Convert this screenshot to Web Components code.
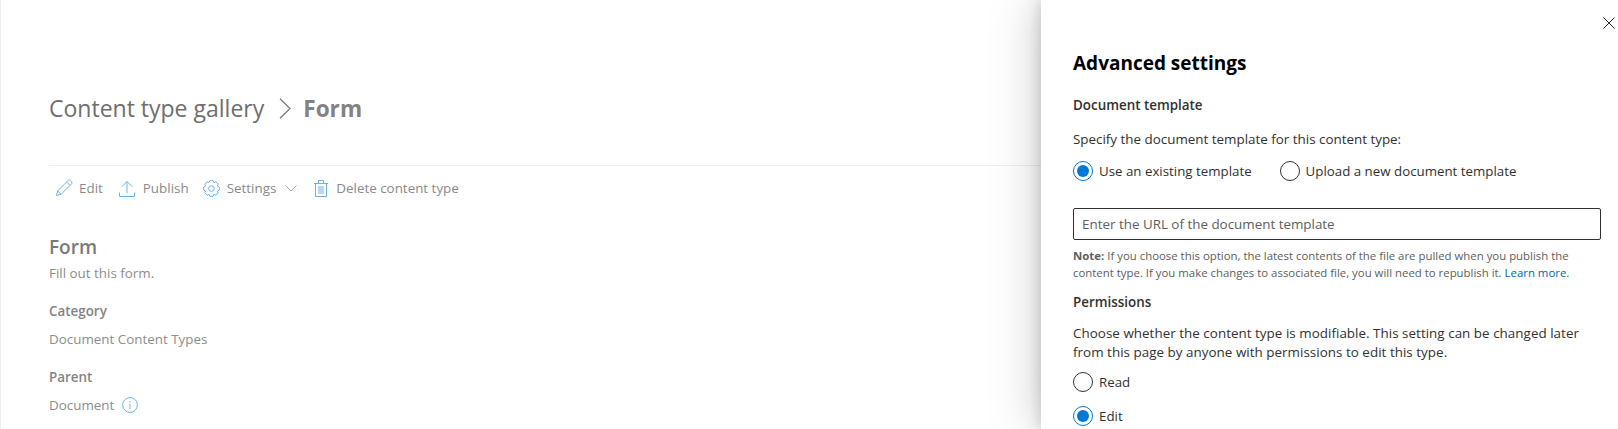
<!DOCTYPE html>
<html lang="en"><head><meta charset="utf-8"><title>Content type gallery</title>
<style>
html,body{margin:0;padding:0;background:#fff;height:429px;overflow:hidden}
body{font-family:"Open Sans","Liberation Sans",sans-serif;font-size:13.4px;color:#323130}
</style></head><body>
<ct-page>
  <ct-breadcrumb slot="head" parent="Content type gallery" current="Form"></ct-breadcrumb>
  <ct-toolbar slot="head">
    <ct-cmd icon="edit" gap="6" style="margin-left:6px">Edit</ct-cmd>
    <ct-cmd icon="publish" gap="8" style="margin-left:16px">Publish</ct-cmd>
    <ct-cmd icon="gear" gap="7" caret style="margin-left:14px">Settings</ct-cmd>
    <ct-cmd icon="trash" gap="8" style="margin-left:17px">Delete content type</ct-cmd>
  </ct-toolbar>
  <ct-details title-text="Form" desc="Fill out this form.">
    <ct-field label="Category">Document Content Types</ct-field>
    <ct-field label="Parent" info>Document</ct-field>
  </ct-details>
</ct-page>
<ct-panel heading="Advanced settings">
  <ct-section label="Document template" style="margin-top:19px">
    <p class="d">Specify the document template for this content type:</p>
  </ct-section>
  <ct-radio-row>
    <ct-radio checked>Use an existing template</ct-radio>
    <ct-radio style="margin-left:28px">Upload a new document template</ct-radio>
  </ct-radio-row>
  <ct-input placeholder="Enter the URL of the document template"></ct-input>
  <ct-note>If you choose this option, the latest contents of the file are pulled when you publish the<br>content type. If you make changes to associated file, you will need to republish it. </ct-note>
  <ct-section label="Permissions" style="margin-top:11px;--gap:12px">
    <p class="d" style="letter-spacing:.035px">Choose whether the content type is modifiable. This setting can be changed later<br>from this page by anyone with permissions to edit this type.</p>
  </ct-section>
  <ct-radio style="margin-top:9px">Read</ct-radio>
  <ct-radio checked style="margin-top:14px">Edit</ct-radio>
</ct-panel>
<script>
function gearPath(){
  const n=8,cx=8.5,cy=8.5,ro=8,ri=6.4;let d='';
  for(let i=0;i<n;i++){
    const a=i*2*Math.PI/n-Math.PI/2,w=.2,g=.19;
    const pts=[[ri,a-w-g],[ro,a-w],[ro,a+w],[ri,a+w+g]];
    for(const [r,t] of pts){d+=(d?'L':'M')+(cx+r*Math.cos(t)).toFixed(2)+' '+(cy+r*Math.sin(t)).toFixed(2);}
  }
  return d+'Z';
}
const ICONS={
edit:'<svg width="18" height="18" viewBox="0 0 18 18" fill="none" stroke="#6cb2ea" stroke-width="1"><path d="M1.5 16.5l1.2-4.6L12.9 1.7c.8-.8 2-.8 2.8 0l.6.6c.8.8.8 2 0 2.8L6.1 15.3z"/><path d="M2.7 11.9l3.4 3.4M11.6 3l3.4 3.4"/></svg>',
publish:'<svg width="16" height="17" viewBox="0 0 16 17" fill="none" stroke="#6cb2ea" stroke-width="1"><path d="M8 13V1.5M2.8 6.7L8 1.5l5.2 5.2M.5 12.5v4h15v-4"/></svg>',
gear:'<svg width="17" height="17" viewBox="0 0 17 17" fill="none" stroke="#6cb2ea" stroke-width="1" stroke-linejoin="round"><path d="'+gearPath()+'"/><circle cx="8.5" cy="8.5" r="2.8"/></svg>',
trash:'<svg width="14" height="17" viewBox="0 0 14 17" fill="none" stroke="#6cb2ea" stroke-width="1"><path d="M0 3.5h14M1.5 3.5v13h11v-13M4.5 3.5V.5h5v3M5 6v8M7 6v8M9 6v8"/></svg>'
};
function def(name,css,html){
  customElements.define(name,class extends HTMLElement{
    connectedCallback(){
      if(this.shadowRoot)return;
      const r=this.attachShadow({mode:'open'});
      r.innerHTML='<style>'+css+'</style>'+(typeof html==='function'?html(this):html);
    }
  });
}
const attr=(e,n)=>e.getAttribute(n)||'';
def('ct-page',`:host{display:block;height:429px;box-sizing:border-box;border-left:1px solid #eeeeee;padding:89px 0 0 48px;color:#7f7f7f;overflow:hidden}`,
 `<slot name="head"></slot><slot></slot>`);
def('ct-breadcrumb',`:host{display:flex;align-items:center;height:38px;color:#6f6e6d;font-size:23px}
 svg{margin:0 12px 0 15px;flex:none}b{font-weight:700;color:#838282;font-size:22.6px}`,
 e=>`<span>${attr(e,'parent')}</span><svg width="12" height="21" viewBox="0 0 12 21" fill="none" stroke="#7a7a7a" stroke-width="1.3"><path d="M1 .7l10 9.8L1 20.3"/></svg><b>${attr(e,'current')}</b>`);
def('ct-toolbar',`:host{display:flex;align-items:center;height:44px;margin-top:38px;border-top:1px solid #eeeeee;width:1100px}`,`<slot></slot>`);
def('ct-cmd',`:host{display:inline-flex;align-items:center;color:#8a8a8a}
 .c{margin-left:9px}`,
 e=>`${ICONS[attr(e,'icon')]}<span style="margin-left:${attr(e,'gap')}px"><slot></slot></span>${e.hasAttribute('caret')?'<svg class="c" width="12" height="7" viewBox="0 0 12 7" fill="none" stroke="#a8a8a8"><path d="M.5.5L6 6l5.5-5.5"/></svg>':''}`);
def('ct-details',`:host{display:block;margin-top:24px}
 h2{margin:0;font-size:19px;font-weight:600;line-height:26px;color:#7b7a79}
 p{margin:0;line-height:20px;margin-top:3px;color:#8d8d8d}`,
 e=>`<h2>${attr(e,'title-text')}</h2><p>${attr(e,'desc')}</p><slot></slot>`);
def('ct-field',`:host{display:block;margin-top:18px}
 b{display:block;font-weight:600;line-height:20px;color:#848484}
 div{display:flex;align-items:center;line-height:20px;margin-top:8px;color:#8d8d8d}
 svg{margin-left:8px}`,
 e=>`<b>${attr(e,'label')}</b><div><slot></slot>${e.hasAttribute('info')?'<svg width="16" height="16" viewBox="0 0 16 16" fill="none" stroke="#6cb2ea"><circle cx="8" cy="8" r="7.4"/><path d="M8 6.8V12M8 4v1.4"/></svg>':''}</div>`);
def('ct-panel',`:host{position:absolute;top:0;right:0;bottom:0;width:577px;box-sizing:border-box;background:#fff;padding:50px 17px 0 32px;box-shadow:0 0 14px rgba(0,0,0,.18),0 0 50px rgba(0,0,0,.22);overflow:hidden;color:#323130}
 h1{margin:0;font-size:19px;line-height:26px;font-weight:700;color:#000}
 button{position:absolute;top:17px;right:3px;width:12px;height:12px;padding:0;border:0;background:none;display:flex}`,
 e=>`<button aria-label="Close"><svg width="12" height="12" viewBox="0 0 12 12" fill="none" stroke="#323130"><path d="M.4.4l11.2 11.2M11.6.4L.4 11.6"/></svg></button><h1>${attr(e,'heading')}</h1><slot></slot>`);
def('ct-section',`:host{display:block}
 b{display:block;font-weight:600;line-height:20px;color:#323130}
 div{margin-top:var(--gap,15px)}
 ::slotted(p){margin:0;line-height:19.5px;color:#323130}`,
 e=>`<b>${attr(e,'label')}</b><div><slot></slot></div>`);
def('ct-radio-row',`:host{display:flex;margin-top:11px}`,`<slot></slot>`);
def('ct-radio',`:host{display:flex;align-items:center;height:20px;color:#323130;font-size:13.3px}
 i{width:20px;height:20px;box-sizing:border-box;border-radius:50%;border:1px solid #323130;margin-right:6px;flex:none;display:flex;align-items:center;justify-content:center}
 i.on{border-color:#0078d4}i.on::after{content:"";width:12px;height:12px;border-radius:50%;background:#0078d4}`,
 e=>`<i class="${e.hasAttribute('checked')?'on':''}"></i><span><slot></slot></span>`);
def('ct-input',`:host{display:flex;align-items:center;height:32px;box-sizing:border-box;border:1px solid #323130;border-radius:2px;margin-top:27px;padding-left:8px;color:#605e5c}`,
 e=>`<span>${attr(e,'placeholder')}</span>`);
def('ct-note',`:host{display:block;margin-top:7px;font-size:11.4px;line-height:17px;color:#605e5c}
 a{color:#0067b8;text-decoration:none}b{font-weight:700}`,
 `<b>Note:</b> <slot></slot><a href="#">Learn more.</a>`);
</script>
</body></html>
